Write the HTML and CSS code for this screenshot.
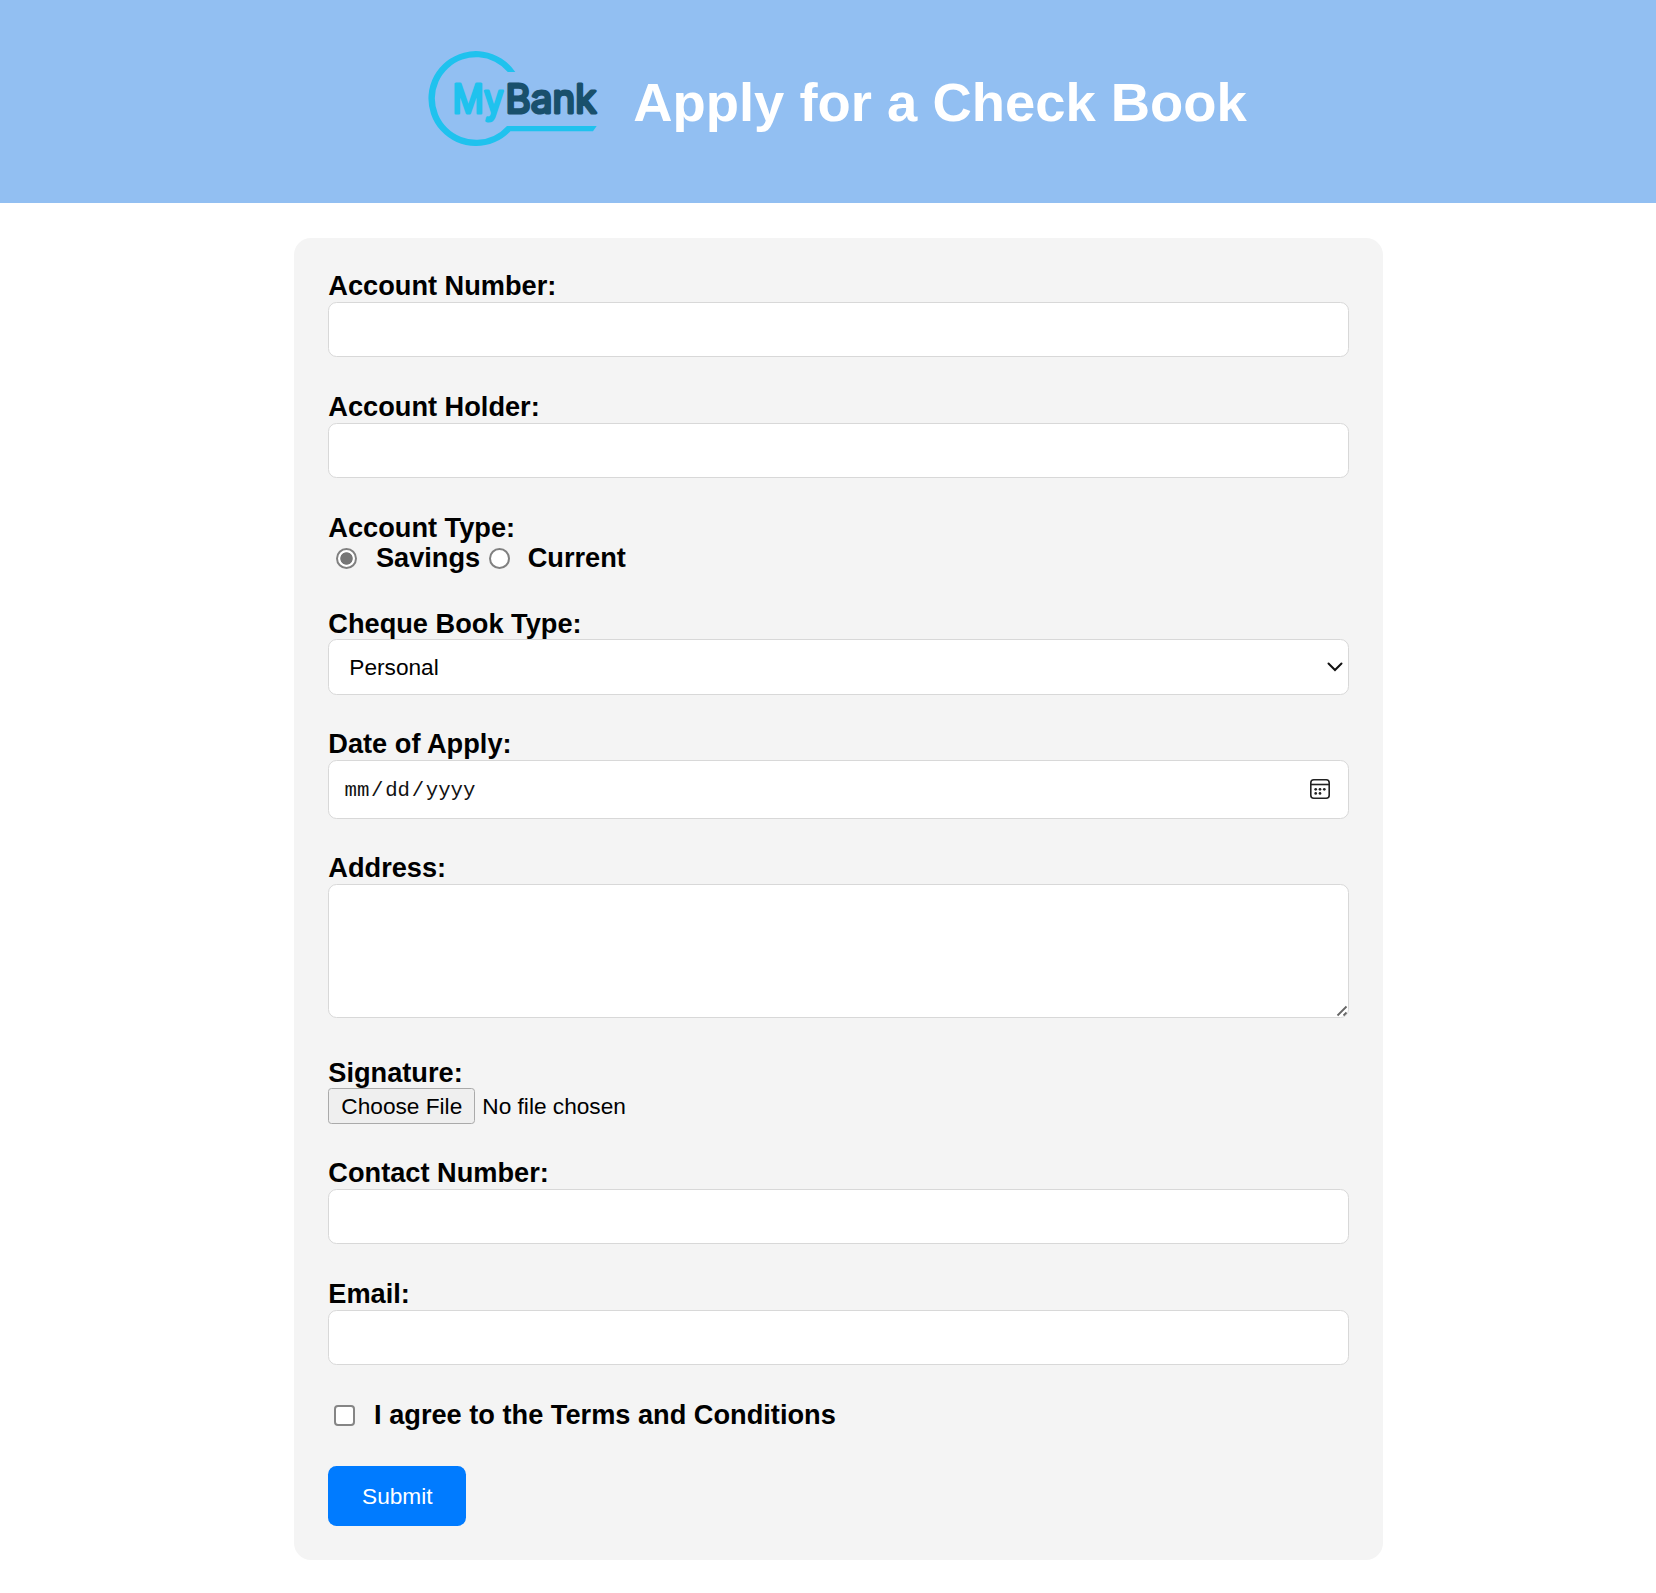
FILE: index.html
```html
<!DOCTYPE html>
<html lang="en">
<head>
<meta charset="utf-8">
<title>Apply for a Check Book</title>
<link rel="stylesheet" href="styles.css">
</head>
<body>
<header class="header">
  <svg class="logo" viewBox="0 0 190 120" role="img" aria-label="MyBank">
    <path class="logo-ring" d="M106.3 30A47.500 47.500 0 1 0 101.4 89.300H184L187.7 84H98A41.300 41.300 0 1 1 98.8 30Z"/>
    <text class="logo-text" y="71.3"><tspan class="logo-my" x="43.5" textLength="51" lengthAdjust="spacingAndGlyphs">My</tspan><tspan class="logo-bank" x="96.5" textLength="91" lengthAdjust="spacingAndGlyphs">Bank</tspan></text>
  </svg>
  <h1 class="title">Apply for a Check Book</h1>
</header>
<form class="card">
  <div class="field">
    <label class="label" for="number">Account Number:</label>
    <input class="control" id="number" type="text">
  </div>
  <div class="field">
    <label class="label" for="holder">Account Holder:</label>
    <input class="control" id="holder" type="text">
  </div>
  <div class="field field-radio">
    <span class="label">Account Type:</span>
    <div class="choices">
      <label class="choice"><input class="radio" type="radio" name="type" checked>Savings</label>
      <label class="choice"><input class="radio" type="radio" name="type">Current</label>
    </div>
  </div>
  <div class="field">
    <label class="label">Cheque Book Type:</label>
    <div class="control select">
      <span>Personal</span>
      <svg class="chevron" viewBox="0 0 16 10"><path d="M1.5 1.5 8 8l6.500-6.500"/></svg>
    </div>
  </div>
  <div class="field">
    <label class="label">Date of Apply:</label>
    <div class="control date">
      <span class="date-text"><span class="part">mm</span>/<span class="part">dd</span>/<span class="part">yyyy</span></span>
      <svg class="calendar" viewBox="0 0 20 20">
        <rect class="line" x=".8" y=".8" width="18.400" height="18.400" rx="3"/>
        <path class="line" d="M1 5.500h18"/>
        <g><circle cx="5.700" cy="10.300" r="1.350"/><circle cx="10" cy="10.300" r="1.350"/><circle cx="14.300" cy="10.300" r="1.350"/><circle cx="5.700" cy="14.400" r="1.350"/><circle cx="10" cy="14.400" r="1.350"/></g>
      </svg>
    </div>
  </div>
  <div class="field field-address">
    <label class="label" for="address">Address:</label>
    <div class="area">
      <textarea class="control textarea" id="address"></textarea>
      <svg class="grip" viewBox="0 0 12 12"><path d="M1.500 10.500l9-9M7.500 10.500l3-3"/></svg>
    </div>
  </div>
  <div class="field">
    <span class="label">Signature:</span>
    <div class="file"><button class="file-button" type="button">Choose File</button><span>No file chosen</span></div>
  </div>
  <div class="field">
    <label class="label" for="contact">Contact Number:</label>
    <input class="control" id="contact" type="text">
  </div>
  <div class="field field-email">
    <label class="label" for="email">Email:</label>
    <input class="control" id="email" type="email">
  </div>
  <label class="terms"><input class="checkbox" type="checkbox">I agree to the Terms and Conditions</label>
  <button class="submit" type="submit">Submit</button>
</form>
</body>
</html>
```
FILE: styles.css
```css
* { box-sizing: border-box; }

body {
  margin: 0;
  background: #fff;
  color: #000;
  font-family: "Liberation Sans", Arial, sans-serif;
}

.header {
  display: flex;
  justify-content: center;
  align-items: center;
  height: 203px;
  background: #92bff2;
}

.logo { width: 190px; height: 120px; margin-right: 34px; }
.logo-ring { fill: #1fc2ee; }
.logo-text {
  font-family: Inter, sans-serif;
  font-size: 39.5px;
  font-weight: 400;
  stroke-width: 3;
  stroke-linejoin: round;
}
.logo-my { fill: #1fc2ee; stroke: #1fc2ee; }
.logo-bank { fill: #19506c; stroke: #19506c; }

.title {
  margin: 0;
  padding-top: 2px;
  color: #fff;
  font-size: 54.4px;
  line-height: 62px;
}

.card {
  width: 1089px;
  height: 1322px;
  margin: 35px 0 0 294.3px;
  padding: 33.4px 34px 34px;
  border-radius: 17px;
  background: #f4f4f4;
  font-size: 27.2px;
  line-height: 30.6px;
}

.field { margin-bottom: 34.6px; }
.field-radio { margin-bottom: 34.8px; }
.field-address { margin-bottom: 40.2px; }
.field-email { margin-bottom: 35px; }
.label { display: block; font-weight: bold; }

.control {
  display: block;
  width: 100%;
  height: 55.4px;
  border: 1px solid #d8d8d8;
  border-radius: 8.5px;
  background: #fff;
  outline: none;
}

.choices { display: flex; font-weight: bold; }
.choice { display: flex; align-items: center; }
.choice + .choice { margin-left: 8.5px; }

.radio {
  appearance: none;
  width: 21px;
  height: 21px;
  margin: 0 18.6px 0 8px;
  border: 2px solid #808080;
  border-radius: 50%;
  background: #fff;
}
.choice + .choice .radio { margin-left: 0; margin-right: 18px; }
.radio:checked { background: radial-gradient(circle, #767676 5.8px, #fff 6.6px); }

.select {
  display: flex;
  align-items: center;
  justify-content: space-between;
  padding: 1px 5px 0 20px;
  font-size: 22.67px;
}
.chevron { width: 16px; height: 10px; fill: none; stroke: #111; stroke-width: 2; stroke-linecap: round; }

.date {
  display: flex;
  align-items: center;
  justify-content: space-between;
  height: 58.8px;
  padding: 0 18px 0 13.5px;
}
.date-text {
  padding-top: 4px;
  font-family: "Liberation Mono", monospace;
  font-size: 20.7px;
  color: #111;
}
.part { padding: 0 1.7px; }
.calendar { width: 20px; height: 20px; fill: #222; }
.line { fill: none; stroke: #222; stroke-width: 1.6; }

.area { position: relative; }
.textarea { height: 134px; resize: none; }
.grip {
  position: absolute;
  right: 1px;
  bottom: 1px;
  width: 12px;
  height: 12px;
  stroke: #666;
  stroke-width: 1.8;
}

.file { display: flex; align-items: center; gap: 7px; height: 35.4px; font-size: 22.67px; }
.file-button {
  width: 147px;
  height: 35.4px;
  padding: 0;
  border: 1.7px solid #aaa;
  border-radius: 3.4px;
  background: #efefef;
  color: #000;
  font: inherit;
}

.terms { display: flex; align-items: center; font-weight: bold; }
.checkbox {
  appearance: none;
  width: 20.6px;
  height: 20.6px;
  margin: 0 19px 0 6.2px;
  border: 2px solid #858585;
  border-radius: 4px;
  background: #fff;
}

.submit {
  display: block;
  width: 138px;
  height: 60px;
  margin-top: 35.4px;
  padding: 0;
  border: 0;
  border-radius: 8.5px;
  background: #007bff;
  color: #fff;
  font: 22.67px "Liberation Sans", Arial, sans-serif;
}
```
